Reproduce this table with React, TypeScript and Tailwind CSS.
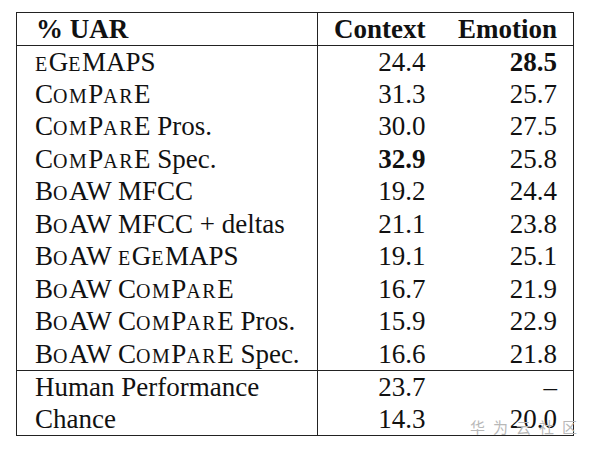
import React from "react";

type Row = { label: React.ReactNode; context: string; emotion: string; bold?: "c" | "e" };

// fake LaTeX small caps: lowercase letters drawn as smaller uppercase
const Sc = ({ children }: { children: string }) => (
	<span className="text-[20px] uppercase tracking-[1.5px]">{children}</span>
);

const EGeMAPS = () => (
	<>
		<Sc>e</Sc>G<Sc>e</Sc>MAPS
	</>
);

const ComParE = () => (
	<>
		C<Sc>om</Sc>P<Sc>ar</Sc>E
	</>
);

const BoAW = () => (
	<>
		B<Sc>o</Sc>AW
	</>
);

const rows: Row[] = [
	{ label: <EGeMAPS />, context: "24.4", emotion: "28.5", bold: "e" },
	{ label: <ComParE />, context: "31.3", emotion: "25.7" },
	{ label: <><ComParE /> Pros.</>, context: "30.0", emotion: "27.5" },
	{ label: <><ComParE /> Spec.</>, context: "32.9", emotion: "25.8", bold: "c" },
	{ label: <><BoAW /> MFCC</>, context: "19.2", emotion: "24.4" },
	{ label: <><BoAW /> MFCC + deltas</>, context: "21.1", emotion: "23.8" },
	{ label: <><BoAW /> <EGeMAPS /></>, context: "19.1", emotion: "25.1" },
	{ label: <><BoAW /> <ComParE /></>, context: "16.7", emotion: "21.9" },
	{ label: <><BoAW /> <ComParE /> Pros.</>, context: "15.9", emotion: "22.9" },
	{ label: <><BoAW /> <ComParE /> Spec.</>, context: "16.6", emotion: "21.8" },
];

const baselines: Row[] = [
	{ label: "Human Performance", context: "23.7", emotion: "–" },
	{ label: "Chance", context: "14.3", emotion: "20.0" },
];

function BodyRow({ row, top }: { row: Row; top?: boolean }) {
	const edge = top ? "border-t border-t-[#222]" : "";
	return (
		<tr className="h-[32.5px]">
			<td className={`border-r border-[#222] pl-[18px] whitespace-nowrap ${edge}`}>{row.label}</td>
			<td className={`pr-[17px] text-right ${row.bold === "c" ? "font-bold" : ""} ${edge}`}>{row.context}</td>
			<td className={`pr-[16px] text-right ${row.bold === "e" ? "font-bold" : ""} ${edge}`}>{row.emotion}</td>
		</tr>
	);
}

export default function App() {
	return (
		<div className="relative min-h-[455px] w-[589px] bg-white pl-[16px] pt-[12px] font-['Liberation_Serif',serif] text-[27px] leading-none text-[#111]">
			<table className="w-[557px] table-fixed border-collapse border border-[#222]">
				<colgroup>
					<col className="w-[301px]" />
					<col className="w-[125px]" />
					<col className="w-[131px]" />
				</colgroup>
				<thead>
					<tr className="h-[33px] border-b border-[#222] font-bold">
						<th className="border-r border-[#222] pl-[19px] text-left">% UAR</th>
						<th className="pr-[17px] text-right">Context</th>
						<th className="pr-[16px] text-right">Emotion</th>
					</tr>
				</thead>
				<tbody>
					{rows.map((r, i) => (
						<BodyRow key={i} row={r} />
					))}
					{baselines.map((r, i) => (
						<BodyRow key={"b" + i} row={r} top={i === 0} />
					))}
				</tbody>
			</table>
			{/* watermark */}
			<span className="absolute left-[470px] top-[419px] font-['Noto_Sans_CJK_SC',sans-serif] text-[15px] tracking-[8px] text-[#b8b8b8]">
				华为云社区
			</span>
		</div>
	);
}
